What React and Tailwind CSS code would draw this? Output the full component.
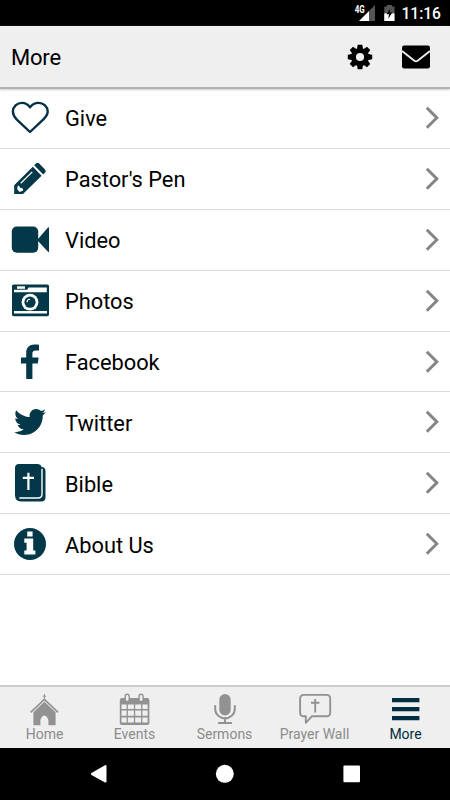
import { FaTwitter } from "react-icons/fa";

const TEAL = "#023848";
const GRAY = "#929292";

// Every list icon is drawn on a 40x40 grid.
function Glyph({ children }) {
  return (
    <svg viewBox="0 0 40 40" className="h-10 w-10 shrink-0" fill={TEAL}>
      {children}
    </svg>
  );
}

const HeartIcon = () => (
  <Glyph>
    <path
      d="M20 9.3C17.8 6.2 15.3 4.9 12 4.9C7 4.9 2.9 8.8 2.9 13.6C2.9 16.8 4.2 19 6.6 21.3L20 34L33.4 21.3C35.8 19 37.7 16.8 37.7 13.6C37.7 8.8 33.5 4.9 28.5 4.9C25 4.9 22.3 6.2 20 9.3Z"
      fill="none"
      stroke="#052f45"
      strokeWidth="2.4"
      strokeLinejoin="round"
    />
  </Glyph>
);

const PencilIcon = () => (
  <Glyph>
    <path d="M4.2 26.2L22.8 7.8L31.6 16.8L13 35.1H4.2Z" />
    <path d="M24.2 6.3L25.9 4.6Q27.4 3 29.2 4.5L35 10.4Q36.6 12 35 13.8L33.2 15.4Z" />
    <path d="M10.7 24.2L22.3 12.9" stroke="#fff" strokeWidth="1.3" />
    <path d="M7.5 27.2L8.8 26.5L10.2 28.8L12.9 29.4L13.2 31.4L9.6 32.9L7.3 30.6Z" fill="#fff" />
  </Glyph>
);

const VideoIcon = () => (
  <Glyph>
    <rect x="1.8" y="6.5" width="26.4" height="26.3" rx="5" />
    <path d="M28 19L38 7.6Q39 6.8 39 8V31.4Q39 32.6 38 31.8L28 21Z" />
  </Glyph>
);

const CameraIcon = () => (
  <Glyph>
    <rect x="2" y="3.6" width="37" height="31.6" rx="1.6" />
    <path d="M7 5.3H15V7.8H7Z" fill="#fff" />
    <path d="M4 8.8H17.2L18.6 6.4H36.8V11.2H4Z" fill="#fff" />
    <path d="M4 30H37V32.6H4Z" fill="#fff" />
    <circle cx="20" cy="21.2" r="8.4" fill="#fff" />
    <circle cx="20" cy="21.2" r="5.6" />
    <path d="M17 21.2A3 3 0 0 1 20 18.2" fill="none" stroke="#fff" strokeWidth="1.1" />
  </Glyph>
);

const FacebookIcon = () => (
  <Glyph>
    <path d="M29 2.8V8.6H26C23.3 8.6 22.4 9.8 22.4 11.8V15.5H28.6L27.8 21.6H22.4V37H16.2V21.6H11V15.5H16.2V10.8C16.2 5.5 19.3 2.4 24.5 2.4C26.5 2.4 28.3 2.6 29 2.8Z" />
  </Glyph>
);

const TwitterIcon = () => (
  <div className="flex h-10 w-10 shrink-0 items-center justify-center">
    <FaTwitter size={32} color={TEAL} />
  </div>
);

const BibleIcon = () => (
  <Glyph>
    <path d="M9 1.1H27Q31 1.1 31.3 3.7Q35.5 4.3 35.5 8V34.2Q35.5 38.5 31.2 38.5H11Q5 38.5 5 32V5.1Q5 1.1 9 1.1Z" />
    <path d="M32 6.2V31Q32 35 28 35H9.8" fill="none" stroke="#fff" strokeWidth="1.4" strokeLinecap="round" />
    <path d="M18.4 9.8V27M12.8 14.8H24" fill="none" stroke="#fff" strokeWidth="2.2" />
  </Glyph>
);

const InfoIcon = () => (
  <Glyph>
    <circle cx="20" cy="20" r="16" />
    <path
      d="M17.2 7.6H22.6V12.4H17.2ZM14.3 14.6H23.2V26.4H25.4V30.6H14.3V26.4H16.6V18.8H14.3Z"
      fill="#fff"
    />
  </Glyph>
);

const items = [
  { label: "Give", icon: HeartIcon },
  { label: "Pastor's Pen", icon: PencilIcon },
  { label: "Video", icon: VideoIcon },
  { label: "Photos", icon: CameraIcon },
  { label: "Facebook", icon: FacebookIcon },
  { label: "Twitter", icon: TwitterIcon },
  { label: "Bible", icon: BibleIcon },
  { label: "About Us", icon: InfoIcon },
];

// Tab icons share a 40x40 grid.
function TabGlyph({ children }) {
  return (
    <svg viewBox="0 0 40 40" className="h-10 w-10" fill={GRAY}>
      {children}
    </svg>
  );
}

const ChurchIcon = () => (
  <TabGlyph>
    <path d="M19.4 7V13M17.7 9.2H21.1" stroke={GRAY} strokeWidth="1" />
    <path d="M5.7 25.4L19.4 12.4L33.1 25.4" fill="none" stroke={GRAY} strokeWidth="1.8" />
    <path d="M19.4 14.8L30.6 25.2V38.2H23.4V33Q22.4 29.2 19.4 28.4Q16.4 29.2 15.4 33V38.2H8.4V25.2Z" />
  </TabGlyph>
);

const CalendarIcon = () => (
  <TabGlyph>
    <rect x="4.8" y="11" width="29.6" height="27" rx="2" />
    <path
      d="M6.5 17.4H11.6V22H6.5ZM12.9 17.4H18.9V22H12.9ZM20.2 17.4H26.1V22H20.2ZM27.4 17.4H32.6V22H27.4ZM6.5 23.6H11.6V28.8H6.5ZM12.9 23.6H18.9V28.8H12.9ZM20.2 23.6H26.1V28.8H20.2ZM27.4 23.6H32.6V28.8H27.4ZM6.5 30.4H11.6V35.6H6.5ZM12.9 30.4H18.9V35.6H12.9ZM20.2 30.4H26.1V35.6H20.2ZM27.4 30.4H32.6V35.6H27.4Z"
      fill="#efefef"
    />
    <rect x="10.2" y="7.2" width="4" height="7.4" rx="2" fill="#efefef" stroke={GRAY} strokeWidth="1.4" />
    <rect x="24.1" y="7.2" width="4" height="7.4" rx="2" fill="#efefef" stroke={GRAY} strokeWidth="1.4" />
  </TabGlyph>
);

const MicIcon = () => (
  <TabGlyph>
    <rect x="14.3" y="7" width="11.4" height="21.4" rx="5.7" />
    <path
      d="M10.2 19V22A9.8 9.4 0 0 0 29.8 22V19M20 31V35.6M13.8 36H26.2"
      fill="none"
      stroke={GRAY}
      strokeWidth="2"
      strokeLinecap="round"
    />
  </TabGlyph>
);

const PrayerIcon = () => (
  <TabGlyph>
    <path
      d="M9 7.9H31.4Q35.2 7.9 35.2 11.7V25.4Q35.2 29.2 31.4 29.2H17L10.8 35.8V29.2H9Q5.1 29.2 5.1 25.4V11.7Q5.1 7.9 9 7.9Z"
      fill="none"
      stroke={GRAY}
      strokeWidth="1.9"
      strokeLinejoin="round"
    />
    <path d="M20.2 12V25.6M16 15.8H24.4" stroke={GRAY} strokeWidth="1.9" />
  </TabGlyph>
);

const MenuIcon = () => (
  <TabGlyph>
    <path d="M6 11H33.4V15.2H6ZM6 20H33.4V24.2H6ZM6 29H33.4V33.2H6Z" fill="#022c40" />
  </TabGlyph>
);

const tabs = [
  { label: "Home", icon: ChurchIcon },
  { label: "Events", icon: CalendarIcon },
  { label: "Sermons", icon: MicIcon },
  { label: "Prayer Wall", icon: PrayerIcon },
  { label: "More", icon: MenuIcon, active: true },
];

function StatusBar() {
  return (
    <div className="flex h-[26px] shrink-0 items-center justify-end bg-black pr-[9px] text-white">
      <svg viewBox="0 0 44 26" className="mr-[3px] h-[26px] w-11">
        <text x="0.8" y="12.6" fontSize="10" fontWeight="700" fill="#fff" textLength="10" lengthAdjust="spacingAndGlyphs">
          4G
        </text>
        <path d="M21 5V21H11.8L5.5 20.6L12 14.1V5Z" fill="none" />
        <path d="M21 5V21H15V11Z" fill="#555" />
        <path d="M15 11V21H5Z" fill="#fff" />
        <path d="M32.9 5H37.9V6.6H40.5V21H30.3V6.6H32.9Z" fill="#555" />
        <path d="M30.3 13.4H40.5V21H30.3Z" fill="#fff" />
        <path d="M36.4 8.4L32.5 14.3H35L34.3 18.8L38.3 12.6H35.7Z" fill="#000" />
      </svg>
      <span className="pt-[2px] text-[15.6px] leading-[26px] font-medium">11:16</span>
    </div>
  );
}

function GearIcon() {
  return (
    <svg viewBox="-13 -13 26 26" className="h-[26px] w-[26px]">
      {[0, 45, 90, 135, 180, 225, 270, 315].map((angle) => (
        <path key={angle} d="M-3.2 -7L-2.3 -12.2H2.3L3.2 -7Z" transform={`rotate(${angle})`} />
      ))}
      <circle r="6.6" fill="none" stroke="#000" strokeWidth="5" />
    </svg>
  );
}

function MailIcon() {
  return (
    <svg viewBox="0 0 28 24" className="h-6 w-7">
      <rect y="0.6" width="28" height="22.8" rx="2.2" />
      <path d="M0 6L12.4 15.8Q14 17 15.6 15.8L28 6" fill="none" stroke="#efefef" strokeWidth="1.8" />
    </svg>
  );
}

export default function App() {
  return (
    <div className="flex h-[800px] w-[450px] flex-col overflow-hidden bg-white font-['Roboto',sans-serif] text-black">
      <StatusBar />
      <header className="z-10 flex h-[63px] shrink-0 items-center border-b-2 border-[#b1b1b1] bg-[#efefef] pr-5 pl-[11px] shadow-[0_1px_2px_#ccc]">
        <h1 className="flex-1 pt-[3px] text-[22px] leading-[26px] font-normal tracking-[-0.2px]">More</h1>
        <GearIcon />
        <div className="w-[29px]" />
        <MailIcon />
      </header>

      <main className="-mt-px flex-1">
        {items.map(({ label, icon: Icon }) => (
          <div key={label} className="flex h-[60.9px] items-center border-b border-[#dcdcdc] pr-[11px] pl-[10px]">
            <Icon />
            <span className="ml-[15px] flex-1 pt-[3px] text-[21.8px] leading-[26px]">{label}</span>
            <svg viewBox="0 0 14 24" className="h-6 w-[14px]" fill="none">
              <path d="M1.8 1.8L11.8 11.8L1.8 21.8" stroke="#858585" strokeWidth="3" />
            </svg>
          </div>
        ))}
      </main>

      <nav className="grid h-[63px] shrink-0 grid-cols-5 border-t-2 border-[#cdcdcd] bg-[#efefef]">
        {tabs.map(({ label, icon: Icon, active }) => (
          <div
            key={label}
            className={`flex flex-col items-center text-[14px] leading-4 ${active ? "pl-px text-[#022c40]" : "pr-px text-[#8c8c8c]"}`}
          >
            <Icon />
            <span className="-mt-px whitespace-nowrap">{label}</span>
          </div>
        ))}
      </nav>

      <div className="h-[52px] shrink-0 bg-black">
        <svg viewBox="0 0 450 52" className="h-[52px] w-[450px]" fill="#fff">
          <path d="M91.5 25L105 17.2Q106.5 16.6 106.5 18V33.6Q106.5 35 105 34.4L91.5 27Q90 26 91.5 25Z" />
          <circle cx="224.8" cy="25.8" r="9" />
          <rect x="343.4" y="17.5" width="16.6" height="16.8" rx="1" />
        </svg>
      </div>
    </div>
  );
}
